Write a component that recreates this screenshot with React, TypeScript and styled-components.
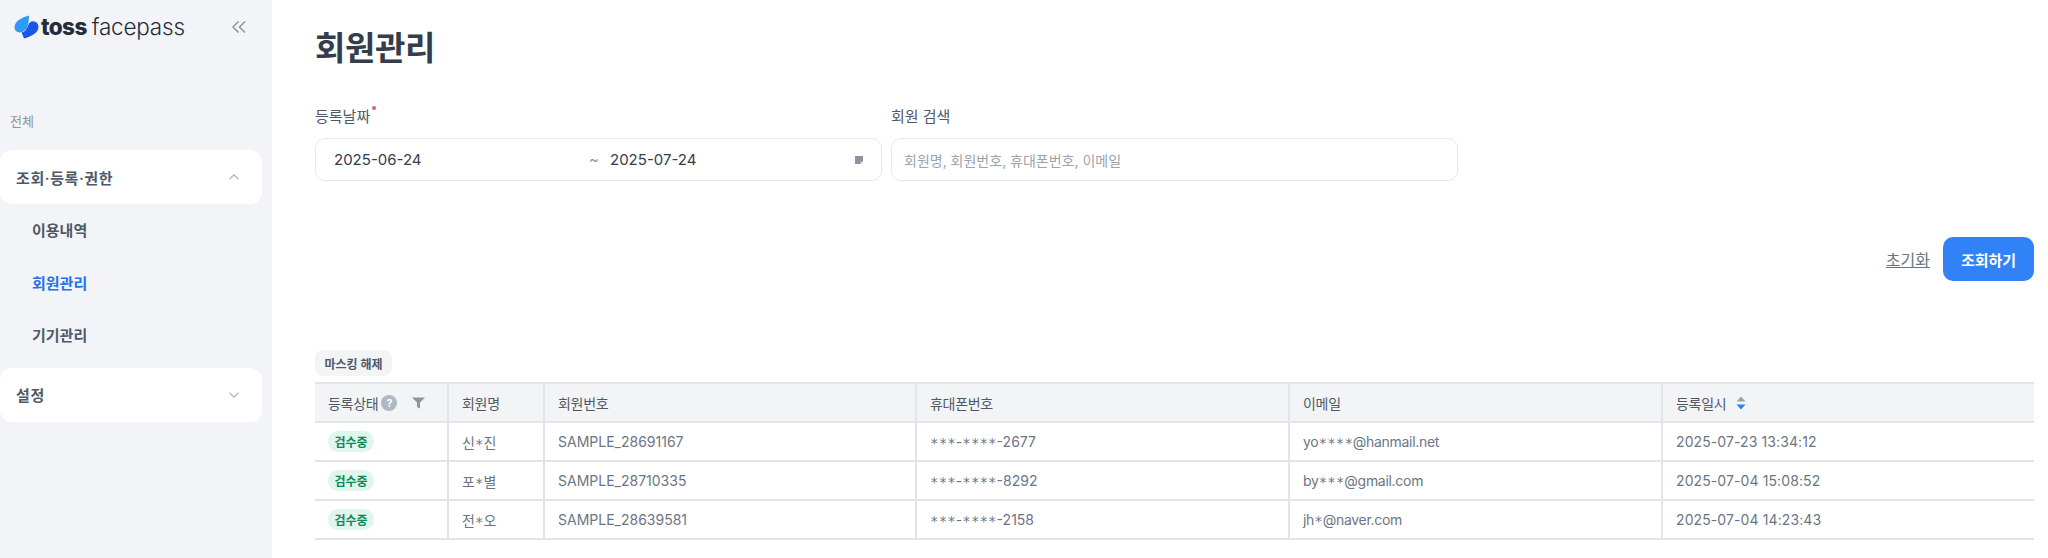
import React from 'react';
import styled, { createGlobalStyle } from 'styled-components';

const GlobalStyle = createGlobalStyle`
    html, body {
        margin: 0;
        padding: 0;
        background: #fff;
        font-family: Inter, "Noto Sans CJK KR", sans-serif;
    }
    * {
        box-sizing: border-box;
    }
`;

const Page = styled.div`
    display: flex;
    width: 2048px;
    height: 558px;
    overflow: hidden;
`;

const Sidebar = styled.aside`
    width: 272px;
    flex-shrink: 0;
    background: #f3f4f7;
    padding: 15px 10px 0 0;
`;

const LogoRow = styled.div`
    display: flex;
    align-items: center;
    justify-content: space-between;
    height: 24px;
    padding: 0 25px 0 14px;
    margin-right: -10px;
`;

const Logo = styled.div`
    display: flex;
    align-items: center;
    font-size: 22.5px;
    line-height: 24px;
    color: #252d3b;
`;

const LogoBold = styled.span`
    margin-left: 2px;
    font-weight: 800;
    letter-spacing: -0.6px;
`;

const LogoLight = styled.span`
    margin-left: 5px;
    font-weight: 300;
    letter-spacing: -0.2px;
`;

const CollapseBtn = styled.div`
    display: flex;
    color: #8b95a1;
`;

const SectionLabel = styled.div`
    margin: 73px 0 20px 10px;
    font-size: 13px;
    line-height: 18px;
    color: #8b95a1;
`;

const GroupCard = styled.div`
    display: flex;
    align-items: center;
    justify-content: space-between;
    height: 54px;
    padding: 0 22px 0 16px;
    background: #fff;
    border-radius: 12px;
    font-size: 15px;
    font-weight: 600;
    letter-spacing: 0.6px;
    color: #4e5968;
`;

const ChevronBox = styled.div`
    display: flex;
    color: #adb5bd;
`;

const SubItem = styled.div<{ $active?: boolean }>`
    display: flex;
    align-items: center;
    height: 52.5px;
    padding: 0 0 1px 32px;
    font-size: 15px;
    font-weight: 600;
    color: ${({ $active }) => ($active ? '#2272eb' : '#4e5968')};
`;

const SubList = styled.div`
    margin-bottom: 6px;
`;

const Main = styled.main`
    flex: 1;
    min-width: 0;
    padding: 0 14px 0 43px;
`;

const Title = styled.h1`
    margin: 26px 0 0;
    font-size: 33px;
    line-height: 44px;
    font-weight: 700;
    letter-spacing: -0.4px;
    color: #333d4b;
`;

const FilterRow = styled.div`
    display: flex;
    gap: 9px;
    margin-top: 37px;
`;

const Field = styled.div`
    width: 567px;
`;

const FieldLabel = styled.label`
    display: block;
    position: relative;
    height: 31px;
    font-size: 15px;
    line-height: 20px;
    color: #4e5968;
`;

const RequiredDot = styled.span`
    position: absolute;
    top: -1px;
    margin-left: 2px;
    width: 4px;
    height: 4px;
    border-radius: 50%;
    background: #f0566a;
`;

const InputBox = styled.div`
    display: flex;
    align-items: center;
    height: 43px;
    border: 1px solid #e5e8eb;
    border-radius: 10px;
    background: #fff;
    font-size: 15px;
    color: #333d4b;
`;

const DateText = styled.span<{ $width: number }>`
    width: ${({ $width }) => $width}px;
    flex-shrink: 0;
`;

const DateBox = styled(InputBox)`
    padding: 0 18px 0 18px;
`;

const Tilde = styled.span`
    width: 21px;
    flex-shrink: 0;
    color: #8b95a1;
`;

const Spacer = styled.div`
    flex: 1;
`;

const CalendarIcon = styled.svg`
    display: block;
`;

const SearchBox = styled(InputBox)`
    padding: 0 12px;
    font-size: 14px;
    color: #9aa3ae;
`;

const ActionRow = styled.div`
    display: flex;
    justify-content: flex-end;
    align-items: center;
    gap: 13px;
    margin-top: 56px;
`;

const ResetLink = styled.a`
    font-size: 16px;
    color: #6b7684;
    text-decoration: underline;
`;

const SearchBtn = styled.button`
    width: 91px;
    height: 44px;
    border: 0;
    border-radius: 10px;
    background: #3182f6;
    color: #fff;
    font-family: inherit;
    font-size: 15px;
    font-weight: 700;
`;

const MaskBtn = styled.button`
    display: block;
    width: 77px;
    height: 26px;
    margin-top: 69px;
    padding: 0;
    border: 0;
    border-radius: 8px;
    background: #f2f4f6;
    color: #4e5968;
    font-family: inherit;
    font-size: 12px;
    font-weight: 600;
`;

const Table = styled.table`
    width: 1719px;
    margin-top: 6px;
    border-collapse: collapse;
    table-layout: fixed;
`;

const Th = styled.th`
    height: 39px;
    padding: 0 13px;
    background: #f2f4f6;
    border-top: 2px solid #e2e4e9;
    border-bottom: 2px solid #e2e4e9;
    border-left: 2px solid #e2e4e9;
    font-size: 14px;
    font-weight: 400;
    letter-spacing: -0.3px;
    text-align: left;
    color: #4e5968;
    &:first-child {
        border-left: 0;
    }
`;

const Td = styled.td`
    height: 39px;
    padding: 0 13px;
    border-bottom: 2px solid #e2e4e9;
    border-left: 2px solid #e2e4e9;
    font-size: 14px;
    color: #6b7684;
    &:first-child {
        border-left: 0;
    }
`;

const EmailCell = styled(Td)`
    letter-spacing: -0.3px;
`;

const DateCell = styled(Td)`
    letter-spacing: 0.1px;
`;

const Star = styled.span`
    display: inline-block;
    width: 8.6px;
    text-align: center;
    font-family: "DejaVu Sans", sans-serif;
    font-size: 14px;
    line-height: 1;
    transform: translateY(1px);
`;

const HeadInner = styled.div`
    display: flex;
    align-items: center;
`;

const HelpIcon = styled.span`
    display: inline-flex;
    align-items: center;
    justify-content: center;
    width: 16px;
    height: 16px;
    margin-left: 3px;
    border-radius: 50%;
    background: #b0b8c1;
    color: #fff;
    font-size: 10px;
    font-weight: 700;
`;

const FilterIcon = styled.svg`
    margin-left: 15px;
`;

const SortIcon = styled.svg`
    margin-left: 10px;
`;

const Badge = styled.span`
    display: inline-flex;
    align-items: center;
    justify-content: center;
    width: 46px;
    height: 21px;
    border-radius: 11px;
    background: #e0f5ec;
    color: #0b8a56;
    font-size: 12px;
    font-weight: 600;
`;

const LogoMark = () => (
    <svg width="25" height="24" viewBox="0 0 25 24">
        <path d="M15 .5C8 2.500.5 6 .5 12.500c0 2.800 2 4.700 5 5 3.500-.4 6.500-2 8-6 1-3 1.500-7.500 1.500-11.500z" fill="#2f9bf8" />
        <path d="M10 23.500c7-2 14.500-5.300 14.500-11.700 0-3-2.300-5.200-5.500-5.500-2.500.2-4 1.500-5 4.500-1.500 4-3.500 6.500-6.500 6.800.8 2 1.800 4 2.500 5.900z" fill="#1c55ea" />
    </svg>
);

const Chevron = ({ up }: { up?: boolean }) => (
    <ChevronBox>
        <svg width="12" height="12" viewBox="0 0 12 12" fill="none" stroke="currentColor" strokeWidth="1.2">
            <path d={up ? 'M1.500 8.200 6 3.800l4.500 4.400' : 'M1.500 3.800 6 8.200l4.500-4.400'} />
        </svg>
    </ChevronBox>
);

// asterisks in the masked values are drawn wider and centred on the line
const Masked = ({ value }: { value: string }) => (
    <>
        {value.split('').map((ch, i) => (ch === '*' ? <Star key={i}>*</Star> : ch))}
    </>
);

type MemberRow = {
    name: string;
    no: string;
    phone: string;
    email: string;
    date: string;
};

const rows: MemberRow[] = [
    { name: '신*진', no: 'SAMPLE_28691167', phone: '***-****-2677', email: 'yo****@hanmail.net', date: '2025-07-23 13:34:12' },
    { name: '포*별', no: 'SAMPLE_28710335', phone: '***-****-8292', email: 'by***@gmail.com', date: '2025-07-04 15:08:52' },
    { name: '전*오', no: 'SAMPLE_28639581', phone: '***-****-2158', email: 'jh*@naver.com', date: '2025-07-04 14:23:43' },
];

const App = () => {
    return (
        <Page>
            <GlobalStyle />
            <Sidebar>
                <LogoRow>
                    <Logo>
                        <LogoMark />
                        <LogoBold>toss</LogoBold>
                        <LogoLight>facepass</LogoLight>
                    </Logo>
                    <CollapseBtn>
                        <svg width="16" height="14" viewBox="0 0 16 14" fill="none" stroke="currentColor" strokeWidth="1.5">
                            <path d="M7.500 1.500 2 7l5.500 5.500M14 1.500 8.500 7l5.500 5.500" />
                        </svg>
                    </CollapseBtn>
                </LogoRow>
                <SectionLabel>전체</SectionLabel>
                <GroupCard>
                    조회·등록·권한
                    <Chevron up />
                </GroupCard>
                <SubList>
                    <SubItem>이용내역</SubItem>
                    <SubItem $active>회원관리</SubItem>
                    <SubItem>기기관리</SubItem>
                </SubList>
                <GroupCard>
                    설정
                    <Chevron />
                </GroupCard>
            </Sidebar>
            <Main>
                <Title>회원관리</Title>
                <FilterRow>
                    <Field>
                        <FieldLabel>
                            등록날짜
                            <RequiredDot />
                        </FieldLabel>
                        <DateBox>
                            <DateText $width={255}>2025-06-24</DateText>
                            <Tilde>~</Tilde>
                            <DateText $width={120}>2025-07-24</DateText>
                            <Spacer />
                            <CalendarIcon width="8" height="9" viewBox="0 0 8 9">
                                <path d="M0 1h8v5.500L5.500 9H0z" fill="#8b95a1" />
                                <path d="M5.500 6.500H8L5.500 9z" fill="#d5d9de" />
                            </CalendarIcon>
                        </DateBox>
                    </Field>
                    <Field>
                        <FieldLabel>회원 검색</FieldLabel>
                        <SearchBox>회원명, 회원번호, 휴대폰번호, 이메일</SearchBox>
                    </Field>
                </FilterRow>
                <ActionRow>
                    <ResetLink>초기화</ResetLink>
                    <SearchBtn>조회하기</SearchBtn>
                </ActionRow>
                <MaskBtn>마스킹 해제</MaskBtn>
                <Table>
                    <colgroup>
                        <col width="133" />
                        <col width="96" />
                        <col width="372" />
                        <col width="373" />
                        <col width="373" />
                        <col width="372" />
                    </colgroup>
                    <thead>
                        <tr>
                            <Th>
                                <HeadInner>
                                    등록상태
                                    <HelpIcon>?</HelpIcon>
                                    <FilterIcon width="13" height="12" viewBox="0 0 13 12">
                                        <path d="M0 .5h13L8 5.500V11.500L5 10V5.500z" fill="#8b95a1" />
                                    </FilterIcon>
                                </HeadInner>
                            </Th>
                            <Th>회원명</Th>
                            <Th>회원번호</Th>
                            <Th>휴대폰번호</Th>
                            <Th>이메일</Th>
                            <Th>
                                <HeadInner>
                                    등록일시
                                    <SortIcon width="10" height="14" viewBox="0 0 10 14">
                                        <path d="M5 .5 9.500 5.500H.5z" fill="#9aa3ae" />
                                        <path d="M5 13.500 9.500 8.500H.5z" fill="#3182f6" />
                                    </SortIcon>
                                </HeadInner>
                            </Th>
                        </tr>
                    </thead>
                    <tbody>
                        {rows.map((row) => (
                            <tr key={row.no}>
                                <Td><Badge>검수중</Badge></Td>
                                <Td><Masked value={row.name} /></Td>
                                <Td>{row.no}</Td>
                                <Td><Masked value={row.phone} /></Td>
                                <EmailCell><Masked value={row.email} /></EmailCell>
                                <DateCell>{row.date}</DateCell>
                            </tr>
                        ))}
                    </tbody>
                </Table>
            </Main>
        </Page>
    );
};

export default App;
